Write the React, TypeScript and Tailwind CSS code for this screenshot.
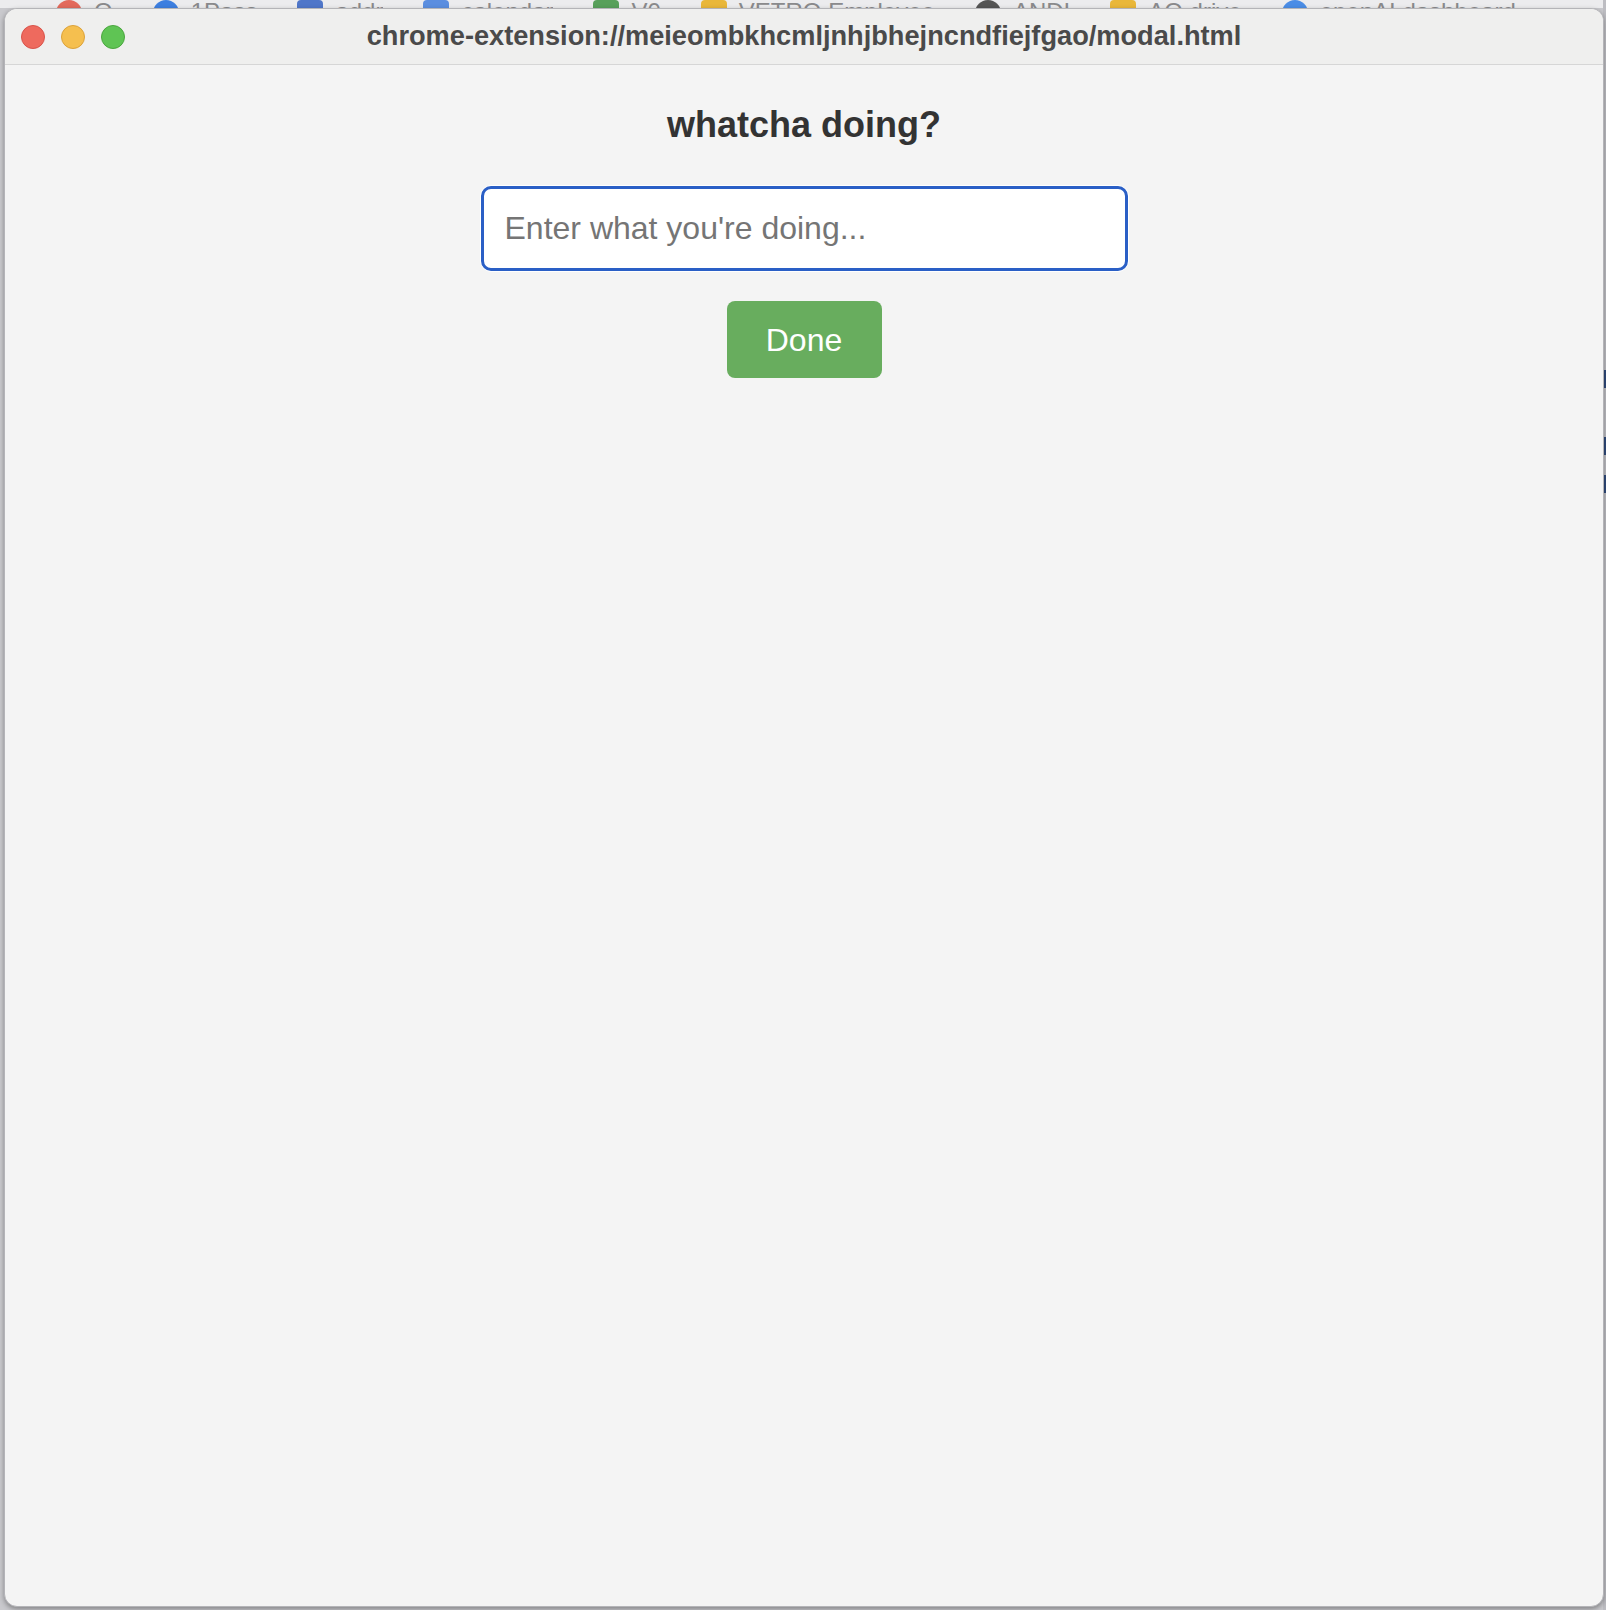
import React from 'react';

const bookmarks = [
  { label: 'Q', icon: 'bg-[#e36a5c]', round: true },
  { label: '1Pass', icon: 'bg-[#3d7fe0]', round: true },
  { label: 'addr', icon: 'bg-[#4f76c9]', round: false },
  { label: 'calendar', icon: 'bg-[#5b8ee0]', round: false },
  { label: 'V0', icon: 'bg-[#58a05b]', round: false },
  { label: 'VETRO Employee', icon: 'bg-[#e9b73a]', round: false },
  { label: 'ANDI', icon: 'bg-[#555555]', round: true },
  { label: 'AO drive', icon: 'bg-[#e9b73a]', round: false },
  { label: 'openAI dashboard', icon: 'bg-[#4b8de6]', round: true },
];

function Backdrop() {
  return (
    <div className="flex h-full w-full flex-row">
      <div className="flex flex-1 flex-col">
        <div className="flex h-[8px] items-start gap-[40px] overflow-hidden bg-[#ececee] pl-[56px] text-[24px] leading-[28px] text-[#8a8a8c]">
          {bookmarks.map((b) => (
            <div key={b.label} className="mt-[-2px] flex h-[10px] items-start gap-[12px] overflow-hidden whitespace-nowrap">
              <span className={`mt-[2px] block h-[26px] w-[26px] shrink-0 ${b.icon} ${b.round ? 'rounded-full' : 'rounded-[4px]'}`} />
              <span>{b.label}</span>
            </div>
          ))}
        </div>
        <div className="flex-1 bg-[#c9c9cd]" />
      </div>
      <div className="flex w-[3px] flex-col bg-[#bdbdc2]">
        <div className="mt-[370px] h-[18px] bg-[#2f4a7a]" />
        <div className="mt-[49px] h-[18px] bg-[#2f4a7a]" />
        <div className="mt-[20px] h-[18px] bg-[#2f4a7a]" />
      </div>
    </div>
  );
}

function TitleBar() {
  return (
    <div className="relative flex h-[56px] shrink-0 items-center justify-center border-b border-[#d6d6d6] bg-[#efefee]">
      <div className="absolute left-[16px] top-[16px] flex gap-[16px]">
        <span className="block h-[24px] w-[24px] rounded-full border border-[#d9534a] bg-[#ee6a5e]" />
        <span className="block h-[24px] w-[24px] rounded-full border border-[#dca23a] bg-[#f5bf4f]" />
        <span className="block h-[24px] w-[24px] rounded-full border border-[#4aa63e] bg-[#5fc454]" />
      </div>
      <span className="text-[27.2px] font-bold text-[#4a4a4a]">
        chrome-extension://meieombkhcmljnhjbhejncndfiejfgao/modal.html
      </span>
    </div>
  );
}

function App() {
  return (
    <div
      className="relative h-[1610px] w-[1606px] overflow-hidden"
      style={{ fontFamily: '"Liberation Sans", Arial, sans-serif' }}
    >
      <Backdrop />
      <div className="absolute left-[4px] top-[8px] flex h-[1599px] w-[1600px] flex-col overflow-hidden rounded-[13px] border border-[#b4b4b8] bg-[#f4f4f4] shadow-[0_2px_5px_rgba(0,0,0,0.35)]">
        <TitleBar />
        <div className="flex flex-col items-center pt-[39px]">
          <h1 className="text-[36px] font-bold leading-[41px] text-[#333333]">whatcha doing?</h1>
          <div className="mt-[40px] rounded-[12px] bg-white p-[1px]">
            <input
              type="text"
              placeholder="Enter what you're doing..."
              className="h-[85px] w-[647px] rounded-[10px] border-[3px] border-[#2a5fc6] bg-white px-[21px] text-[32px] text-[#333] outline-none placeholder:text-[#757575]"
            />
          </div>
          <button className="mt-[29px] h-[77px] w-[155px] rounded-[8px] bg-[#68ad5e] text-[32px] text-white">
            Done
          </button>
        </div>
      </div>
    </div>
  );
}

export default App;
